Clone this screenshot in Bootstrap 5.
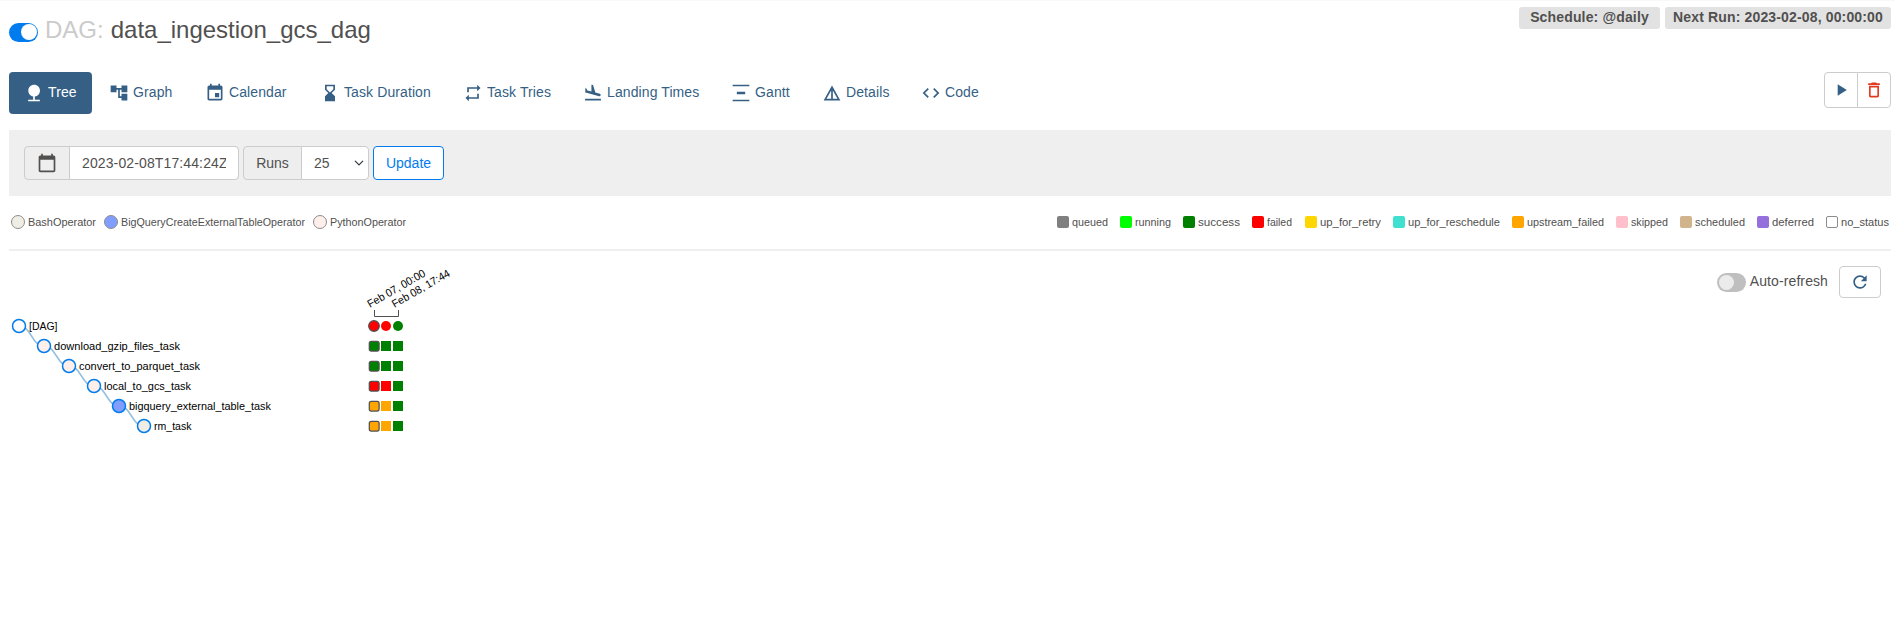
<!DOCTYPE html>
<html lang="en">
<head>
<meta charset="utf-8">
<title>data_ingestion_gcs_dag - Tree</title>
<link rel="stylesheet" href="https://cdn.jsdelivr.net/npm/bootstrap@5.3.0/dist/css/bootstrap.min.css">
<script src="https://cdn.jsdelivr.net/npm/bootstrap@5.3.0/dist/js/bootstrap.bundle.min.js"></script>
<style>
body{font-family:"Liberation Sans",Arial,sans-serif;font-size:14px;line-height:20px;color:#51504f;background:#fff;overflow:hidden;border-top:1px solid #f8f8f8}
main{padding:0 4px 0 9px}
svg.mi{width:20px;height:20px;fill:currentColor;flex:none}
.dag-head{height:71px;padding-top:6px}
.dag-title{font-size:24px;line-height:30px;margin:9px 0 0;font-weight:400;height:30px}
.dag-title .pre{color:#cbcbcb;margin:0 7px 0 7px}
.dag-title span:not(.tog){margin-top:-2px}
.tog{width:29px;height:19px;border-radius:10px;background:#017cee;padding:1.5px;display:inline-flex;justify-content:flex-end;flex:none}
.dag-title .tog{margin-top:2px}
.tog::after{content:"";width:16px;height:16px;border-radius:50%;background:#fff}
.tog.off{background:#bfbfbf;justify-content:flex-start;padding:2px}
.tog.off::after{background:#ebebeb;width:15px;height:15px}
.tag{background:#e2e2e2;border-radius:3px;height:22px;line-height:21px;font-weight:700;text-align:center;letter-spacing:.15px}
.views{gap:2px}
.views .nav-link{color:#355f85;padding:0 0 0 15px;height:42px;gap:4px;border-radius:4px;line-height:34px;letter-spacing:.1px}
.views .nav-link span{margin-top:-2px}
.views .nav-link.active{background:#355f85;color:#fff}
.act{height:36px;width:34px;border:1px solid #ccc;background:#fff;padding:0;border-radius:4px;color:#355f85}
.filter{height:66px;margin-top:16px;background:#efefef;padding:16px 15px;gap:4px}
.filter .input-group{width:auto;height:34px;flex-wrap:nowrap}
.filter .input-group-text,.filter .form-control,.filter .form-select{font-size:14px;height:34px;border-color:#ccc;color:#51504f;border-radius:4px;padding:0 12px}
.filter .form-control{letter-spacing:.12px}
.filter .input-group-text{background:#eee;justify-content:center;padding:0}
.filter .form-select{width:68px;flex:none;background-size:10px;background-position:right 4px center}
.btn-up{height:34px;width:71px;font-size:14px;padding:0;border:1px solid #017cee;color:#017cee;background:#fff;border-radius:4px}
.leg{height:55px;font-size:11px;border-bottom:2px solid #efefef;margin-bottom:14px;padding:0 2px 2px}
.leg i{flex:none}
.op,.st{white-space:nowrap;display:inline-flex;align-items:center;gap:3px}
.op i{width:14px;height:14px;border:1px solid #8d8d8d;border-radius:50%}
.st i{width:12px;height:12px;border-radius:2px}
.leg text{fill:#51504f}
.tree{display:block;margin-left:-9px;margin-top:-1px}
.tree text{font-size:11px;fill:#000}
</style>
</head>
<body>
<main>
 <header class="dag-head d-flex justify-content-between">
  <h3 class="dag-title d-flex align-items-center"><span class="tog"></span><span class="pre">DAG:</span><span>data_ingestion_gcs_dag</span></h3>
  <div class="d-flex" style="gap:5px"><span class="tag" style="width:141px">Schedule: @daily</span><span class="tag" style="width:226px">Next Run: 2023-02-08, 00:00:00</span></div>
 </header>
 <div class="d-flex justify-content-between">
  <nav class="nav views flex-nowrap text-nowrap">
   <a class="nav-link active d-flex align-items-center" style="width:83px" href="#"><svg class="mi" viewBox="0 0 24 24"><path d="M13 16.12c3.47-.41 6.17-3.36 6.17-6.95 0-3.87-3.13-7-7-7s-7 3.13-7 7c0 3.47 2.52 6.34 5.83 6.89V20H5v2h14v-2h-6v-3.88z"/></svg><span>Tree</span></a>
   <a class="nav-link d-flex align-items-center" style="width:94px" href="#"><svg class="mi" viewBox="0 0 24 24"><path d="M22 11V3h-7v3H9V3H2v8h7V8h2v10h4v3h7v-8h-7v3h-2V8h2v3z"/></svg><span>Graph</span></a>
   <a class="nav-link d-flex align-items-center" style="width:113px" href="#"><svg class="mi" viewBox="0 0 24 24"><path d="M17 12h-5v5h5v-5zM16 1v2H8V1H6v2H5c-1.11 0-1.99.9-1.99 2L3 19c0 1.1.89 2 2 2h14c1.1 0 2-.9 2-2V5c0-1.1-.9-2-2-2h-1V1h-2zm3 18H5V8h14v11z"/></svg><span>Calendar</span></a>
   <a class="nav-link d-flex align-items-center" style="width:141px" href="#"><svg class="mi" viewBox="0 0 24 24"><path d="M18 22l-.01-6L14 12l3.99-4.01L18 2H6v6l4 4-4 3.99V22h12zM8 7.500V4h8v3.500l-4 4-4-4z"/></svg><span>Task Duration</span></a>
   <a class="nav-link d-flex align-items-center" style="width:118px" href="#"><svg class="mi" viewBox="0 0 24 24"><path d="M7 7h10v3l4-4-4-4v3H5v6h2V7zm10 10H7v-3l-4 4 4 4v-3h12v-6h-2v4z"/></svg><span>Task Tries</span></a>
   <a class="nav-link d-flex align-items-center" style="width:146px" href="#"><svg class="mi" viewBox="0 0 24 24"><path d="M2.500 19h19v2h-19zm7.180-5.730l4.350 1.160 5.310 1.420c.8.21 1.620-.26 1.840-1.060.21-.8-.26-1.620-1.060-1.840l-5.310-1.420-2.760-9.020L10.120 2v8.280L5.150 8.950l-.93-2.320-1.450-.39v5.170l1.600.43 5.310 1.430z"/></svg><span>Landing Times</span></a>
   <a class="nav-link d-flex align-items-center" style="width:89px" href="#"><svg class="mi" viewBox="0 0 24 24"><path d="M22 2v2H2V2zM7 10.500v3h10v-3zM2 20v2h20v-2z"/></svg><span>Gantt</span></a>
   <a class="nav-link d-flex align-items-center" style="width:97px" href="#"><svg class="mi" viewBox="0 0 24 24"><path d="M12 3L2 21h20L12 3zm1 5.920L18.600 19H13V8.920zm-2 0V19H5.400L11 8.920z"/></svg><span>Details</span></a>
   <a class="nav-link d-flex align-items-center" href="#"><svg class="mi" viewBox="0 0 24 24"><path d="M9.400 16.600L4.800 12l4.600-4.600L8 6l-6 6 6 6 1.400-1.400zm5.200 0l4.600-4.600-4.600-4.600L16 6l6 6-6 6-1.400-1.400z"/></svg><span>Code</span></a>
  </nav>
  <div class="btn-group align-self-start">
   <button class="btn act d-flex align-items-center justify-content-center" aria-label="Trigger"><svg class="mi" viewBox="0 0 24 24"><path d="M8 5v14l11-7z"/></svg></button>
   <button class="btn act d-flex align-items-center justify-content-center" aria-label="Delete"><svg class="mi" style="color:#e43921" viewBox="0 0 24 24"><path d="M6 19c0 1.100.9 2 2 2h8c1.100 0 2-.9 2-2V7H6v12zM8 9h8v10H8V9zm7.500-5l-1-1h-5l-1 1H5v2h14V4z"/></svg></button>
  </div>
 </div>
 <form class="filter d-flex">
  <div class="input-group"><span class="input-group-text" style="width:46px"><svg class="mi" viewBox="0 0 24 24"><path d="M20 3h-1V1h-2v2H7V1H5v2H4c-1.100 0-2 .9-2 2v16c0 1.100.9 2 2 2h16c1.100 0 2-.9 2-2V5c0-1.100-.9-2-2-2zm0 18H4V8h16v13z"/></svg></span><input class="form-control" style="width:170px;flex:none" value="2023-02-08T17:44:24Z" aria-label="Base date"></div>
  <div class="input-group"><span class="input-group-text" style="width:59px">Runs</span><select class="form-select" aria-label="Runs"><option>25</option></select></div>
  <button type="button" class="btn btn-up">Update</button>
 </form>
 <div class="leg d-flex justify-content-between align-items-center">
  <div class="d-flex" id="ops"></div>
  <div class="d-flex" id="states"></div>
 </div>
 <div class="d-flex justify-content-between align-items-start">
  <svg class="tree" id="tree" width="500" height="180" viewBox="0 264 500 180"></svg>
  <div class="d-flex align-items-center" style="padding:1px 10px 0 0"><span class="tog off" style="margin-top:1px"></span><span style="margin:-2px 11px 0 4px;letter-spacing:.1px">Auto-refresh</span><button class="btn act d-flex align-items-center justify-content-center" style="width:42px;height:32px" aria-label="Refresh"><svg class="mi" viewBox="0 0 24 24"><path d="M17.650 6.350A7.958 7.958 0 0012 4c-4.420 0-7.990 3.580-7.990 8s3.570 8 7.990 8c3.730 0 6.840-2.550 7.730-6h-2.080A5.990 5.990 0 0112 18c-3.310 0-6-2.690-6-6s2.690-6 6-6c1.660 0 3.140.69 4.220 1.780L13 11h7V4l-2.350 2.350z"/></svg></button></div>
 </div>
</main>
<script>
// Legend entries: [label, colour, slot width including the gap to the next entry, label width]
const fit='lengthAdjust="spacingAndGlyphs"';
const label=(t,w)=>`<svg width="${w}" height="14"><text x="0" y="11" textLength="${w}" ${fit}>${t}</text></svg>`;
document.getElementById('ops').innerHTML=[["BashOperator","#f0ede4",93,68],["BigQueryCreateExternalTableOperator","#819eff",209,184],["PythonOperator","#ffefeb",94,76]]
 .map(([t,c,s,w])=>`<span class="op" style="width:${s}px"><i style="background:${c}"></i>${label(t,w)}</span>`).join('');
document.getElementById('states').innerHTML=[["queued","gray",63,36],["running","lime",63,36],["success","green",69,42],["failed","red",53,25],["up_for_retry","gold",88,61],["up_for_reschedule","turquoise",119,92],["upstream_failed","orange",104,77],["skipped","pink",64,37],["scheduled","tan",77,50],["deferred","mediumpurple",69,42],["no_status","#fff",63,48]]
 .map(([t,c,s,w])=>`<span class="st" style="width:${s}px"><i style="background:${c}${c=='#fff'?';border:1px solid #8d8d8d':''}"></i>${label(t,w)}</span>`).join('');
// Task tree and run grid
const rows=[["[DAG]","#fff",28.5,["red","red","green"]],["download_gzip_files_task","#ffefeb",126,["green","green","green"]],["convert_to_parquet_task","#ffefeb",121,["green","green","green"]],["local_to_gcs_task","#ffefeb",87,["red","red","green"]],["bigquery_external_table_task","#819eff",142,["orange","orange","green"]],["rm_task","#f0ede4",37.5,["orange","orange","green"]]];
let links='',nodes='',cells='';
rows.forEach(([t,c,w,s],i)=>{const x=19+25*i,y=326+20*i;
 if(i<5)links+=`<path d="M${x} ${y}C${x+12.5} ${y} ${x+12.5} ${y+20} ${x+25} ${y+20}" fill="none" stroke="#91bfe0" stroke-width="1.500"/>`;
 nodes+=`<circle cx="${x}" cy="${y}" r="6.500" fill="${c}" stroke="#017cee" stroke-width="1.500"/><text x="${x+10}" y="${y+4}" textLength="${w}" ${fit}>${t}</text>`;
 s.forEach((f,j)=>{const cx=374+12*j,st=j?'':' stroke="#51504f" stroke-width="1.250"';
  cells+=i?`<rect x="${cx-5+(j?0:.3)}" y="${y-5+(j?0:.3)}" width="${j?10:9.8}" height="${j?10:9.8}" rx="${j?0:2}" fill="${f}"${st}/>`:`<circle cx="${cx}" cy="${y}" r="${j?5:5.3}" fill="${f}"${st}/>`;});
});
document.getElementById('tree').innerHTML=links+nodes+cells+`<path d="M374.500 310v6.500h24V310" fill="none" stroke="#51504f"/><text transform="translate(370 308) rotate(-30)" textLength="65" ${fit}>Feb 07, 00:00</text><text transform="translate(394.500 308) rotate(-30)" textLength="65" ${fit}>Feb 08, 17:44</text>`;
</script>
</body>
</html>
